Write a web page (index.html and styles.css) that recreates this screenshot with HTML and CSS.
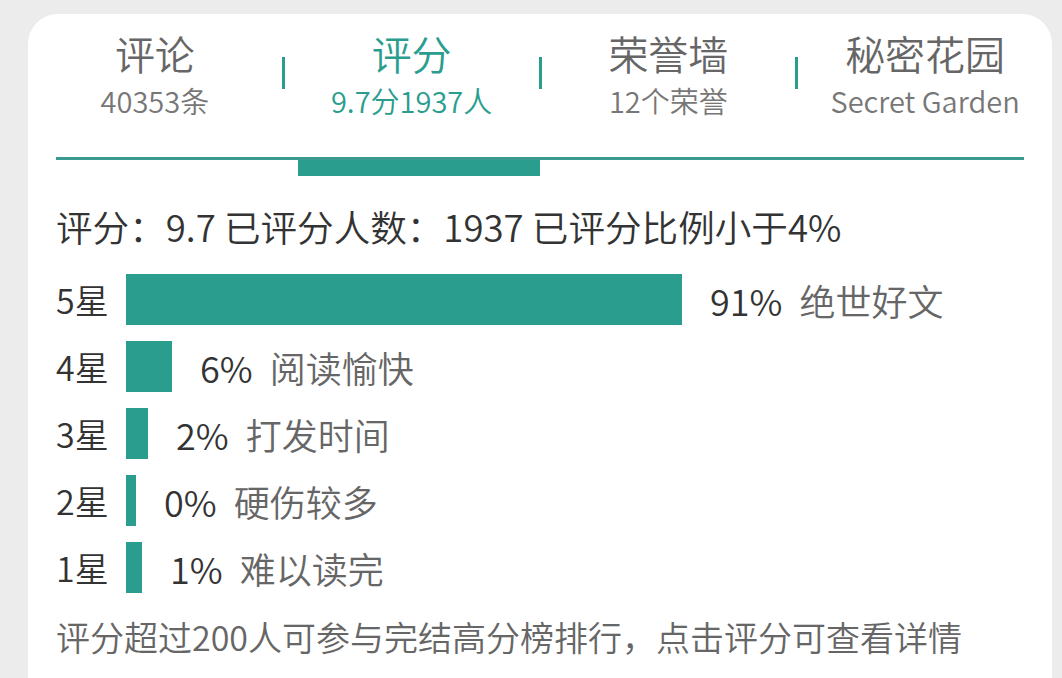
FILE: index.html
```html
<!DOCTYPE html>
<html lang="zh">
<head>
<meta charset="utf-8">
<title>评分</title>
<link rel="stylesheet" href="styles.css">
</head>
<body>
<div class="card">
  <div class="tabs">
    <div class="tab">
      <div class="tab-title">评论</div>
      <div class="tab-sub">40353条</div>
    </div>
    <div class="divider"></div>
    <div class="tab active">
      <div class="tab-title">评分</div>
      <div class="tab-sub">9.7分1937人</div>
    </div>
    <div class="divider"></div>
    <div class="tab">
      <div class="tab-title">荣誉墙</div>
      <div class="tab-sub">12个荣誉</div>
    </div>
    <div class="divider"></div>
    <div class="tab">
      <div class="tab-title">秘密花园</div>
      <div class="tab-sub">Secret Garden</div>
    </div>
  </div>
  <div class="track">
    <div class="track-line"></div>
    <div class="indicator"></div>
  </div>
  <div class="content">
    <div class="summary">评分：9.7 已评分人数：1937 已评分比例小于4%</div>
    <div class="rows">
      <div class="row"><span class="star">5星</span><span class="bar" style="width:556px"></span><span class="pct">91%</span><span class="desc">绝世好文</span></div>
      <div class="row"><span class="star">4星</span><span class="bar" style="width:46px"></span><span class="pct">6%</span><span class="desc">阅读愉快</span></div>
      <div class="row"><span class="star">3星</span><span class="bar" style="width:22px"></span><span class="pct">2%</span><span class="desc">打发时间</span></div>
      <div class="row"><span class="star">2星</span><span class="bar" style="width:10px"></span><span class="pct">0%</span><span class="desc">硬伤较多</span></div>
      <div class="row"><span class="star">1星</span><span class="bar" style="width:16px"></span><span class="pct">1%</span><span class="desc">难以读完</span></div>
    </div>
    <div class="note">评分超过200人可参与完结高分榜排行，点击评分可查看详情</div>
  </div>
</div>
</body>
</html>
```
FILE: styles.css
```css
html, body {
  margin: 0;
  padding: 0;
  background: #ececec;
  height: 100%;
  overflow: hidden;
}
body {
  font-family: "Noto Sans CJK SC", "Noto Sans", sans-serif;
  font-weight: 350;
}
.card {
  margin: 14px 10px 0 28px;
  background: #ffffff;
  border-radius: 30px 30px 0 0;
  min-height: 700px;
}
.tabs {
  display: flex;
  align-items: flex-start;
  padding-top: 15px;
}
.tab {
  flex: 1;
  text-align: center;
  color: #666666;
}
.tab-title {
  font-size: 40px;
  line-height: 48px;
}
.tab-sub {
  font-size: 29px;
  line-height: 46px;
  color: #777777;
}
.tab.active, .tab.active .tab-sub {
  color: #2a9d8f;
}
.divider {
  width: 3px;
  height: 32px;
  margin-top: 28px;
  background: #2a9d8f;
}
.track {
  margin: 34px 28px 0 28px;
}
.track-line {
  height: 3px;
  background: #3a9a8e;
}
.indicator {
  width: 25%;
  margin-left: 25%;
  height: 16px;
  background: #2a9d8f;
}
.content {
  padding: 0 28px;
}
.summary {
  margin-top: 27px;
  font-size: 36.6px;
  line-height: 48px;
  color: #333333;
}
.rows {
  display: flex;
  flex-direction: column;
  gap: 16px;
  margin-top: 23px;
}
.row {
  display: flex;
  align-items: center;
  height: 51px;
  font-size: 36px;
}
.star {
  width: 70px;
  color: #333333;
  font-size: 34px;
}
.bar {
  height: 51px;
  background: #2a9d8f;
}
.pct {
  margin-left: 28px;
  color: #333333;
}
.desc {
  margin-left: 17px;
  color: #666666;
}
.note {
  margin-top: 21px;
  font-size: 34px;
  line-height: 46px;
  color: #666666;
}
```
